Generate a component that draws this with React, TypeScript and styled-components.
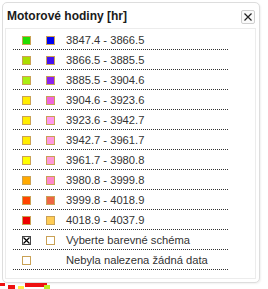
import React from "react";
import styled, { createGlobalStyle } from "styled-components";

type LegendItem = {
  low: string; // colour of the first swatch, or "check" / "empty"
  high?: string; // colour of the second swatch, undefined for none
  label: string;
};

const items: LegendItem[] = [
  { low: "#22dd00", high: "#0000ee", label: "3847.4 - 3866.5" },
  { low: "#aadd00", high: "#4411ee", label: "3866.5 - 3885.5" },
  { low: "#aaee11", high: "#8822ee", label: "3885.5 - 3904.6" },
  { low: "#ffee00", high: "#ee66dd", label: "3904.6 - 3923.6" },
  { low: "#ffee00", high: "#ff99ee", label: "3923.6 - 3942.7" },
  { low: "#ffee00", high: "#ff99e0", label: "3942.7 - 3961.7" },
  { low: "#ffff00", high: "#ff99d8", label: "3961.7 - 3980.8" },
  { low: "#ffaa00", high: "#ff88cc", label: "3980.8 - 3999.8" },
  { low: "#ff4400", high: "#ee6644", label: "3999.8 - 4018.9" },
  { low: "#ee0000", high: "#ffcc55", label: "4018.9 - 4037.9" },
  { low: "check", high: "#ffffff", label: "Vyberte barevné schéma" },
  { low: "#ffffff", label: "Nebyla nalezena žádná data" },
];

const GlobalStyle = createGlobalStyle`
  body {
    margin: 0;
    background: #ffffff;
    font-family: "Liberation Sans", Arial, sans-serif;
  }
`;

const Panel = styled.div`
  box-sizing: border-box;
  margin: 2px 0 0 2px;
  width: 258px;
  height: 281px;
  border: 1px solid #dddddd;
  border-radius: 5px;
  background: #ffffff;
  display: flex;
  flex-direction: column;
  box-shadow: 1px 1px 2px rgba(0, 0, 0, 0.06);
`;

const Header = styled.div`
  height: 25px;
  display: flex;
  align-items: center;
  justify-content: space-between;
  padding: 0 4px 0 4px;
`;

const Title = styled.div`
  font-size: 12px;
  font-weight: bold;
  color: #1a1a1a;
  margin-top: 1px;
`;

const CloseButton = styled.button`
  box-sizing: border-box;
  width: 14px;
  height: 14px;
  padding: 0;
  border: 1px solid #cfcfcf;
  border-radius: 2px;
  background: #fafafa;
  display: flex;
  align-items: center;
  justify-content: center;
  margin-top: 2px;
`;

const Content = styled.div`
  flex: 1;
  margin: 0 3px 3px 2px;
  border: 1px solid #ececec;
  padding: 1px 0 0 7px;
`;

const Row = styled.div`
  box-sizing: border-box;
  width: 215px;
  height: 20px;
  display: grid;
  grid-template-columns: 24px 20px 1fr;
  align-items: center;
  padding-left: 9px;
  border-bottom: 1px dotted #333333;
`;

const Swatch = styled.span<{ $fill: string }>`
  box-sizing: border-box;
  width: 9px;
  height: 9px;
  border: 1px solid #c9a155;
  background: ${(p) => p.$fill};
  margin-top: 1px;
`;

const CheckSwatch = styled.span`
  box-sizing: border-box;
  width: 9px;
  height: 9px;
  border: 1px solid #444444;
  background: #ffffff;
  display: flex;
  margin-top: 1px;
`;

const Label = styled.span`
  font-size: 11.2px;
  color: #333333;
`;

const MapEdge = styled.svg`
  display: block;
`;

const App: React.FC = () => {
  return (
    <>
      <GlobalStyle />
      <Panel>
        <Header>
          <Title>Motorové hodiny [hr]</Title>
          <CloseButton aria-label="close">
            <svg width="10" height="10" viewBox="0 0 10 10">
              <path d="M1.5 1.5 L8.5 8.5 M8.5 1.5 L1.5 8.5" stroke="#222" strokeWidth="1.2" />
            </svg>
          </CloseButton>
        </Header>
        <Content>
          {items.map((item) => (
            <Row key={item.label}>
              {item.low === "check" ? (
                <CheckSwatch>
                  <svg width="7" height="7" viewBox="0 0 7 7">
                    <path d="M0.5 0.5 L6.5 6.5 M6.5 0.5 L0.5 6.5" stroke="#000" strokeWidth="1.2" />
                  </svg>
                </CheckSwatch>
              ) : (
                <Swatch $fill={item.low} />
              )}
              {item.high ? <Swatch $fill={item.high} /> : <span />}
              <Label>{item.label}</Label>
            </Row>
          ))}
        </Content>
      </Panel>
      {/* bits of the map visible under the legend */}
      <MapEdge width="268" height="6" viewBox="0 0 268 6">
        <rect x="0" y="0" width="5" height="3" fill="#ee1111" />
        <rect x="8" y="2" width="7" height="4" fill="#ee1111" />
        <rect x="18" y="3" width="6" height="3" fill="#ffee44" />
        <rect x="25" y="0" width="22" height="4" fill="#ee1111" />
        <rect x="44" y="2" width="6" height="4" fill="#bbee22" />
      </MapEdge>
    </>
  );
};

export default App;
